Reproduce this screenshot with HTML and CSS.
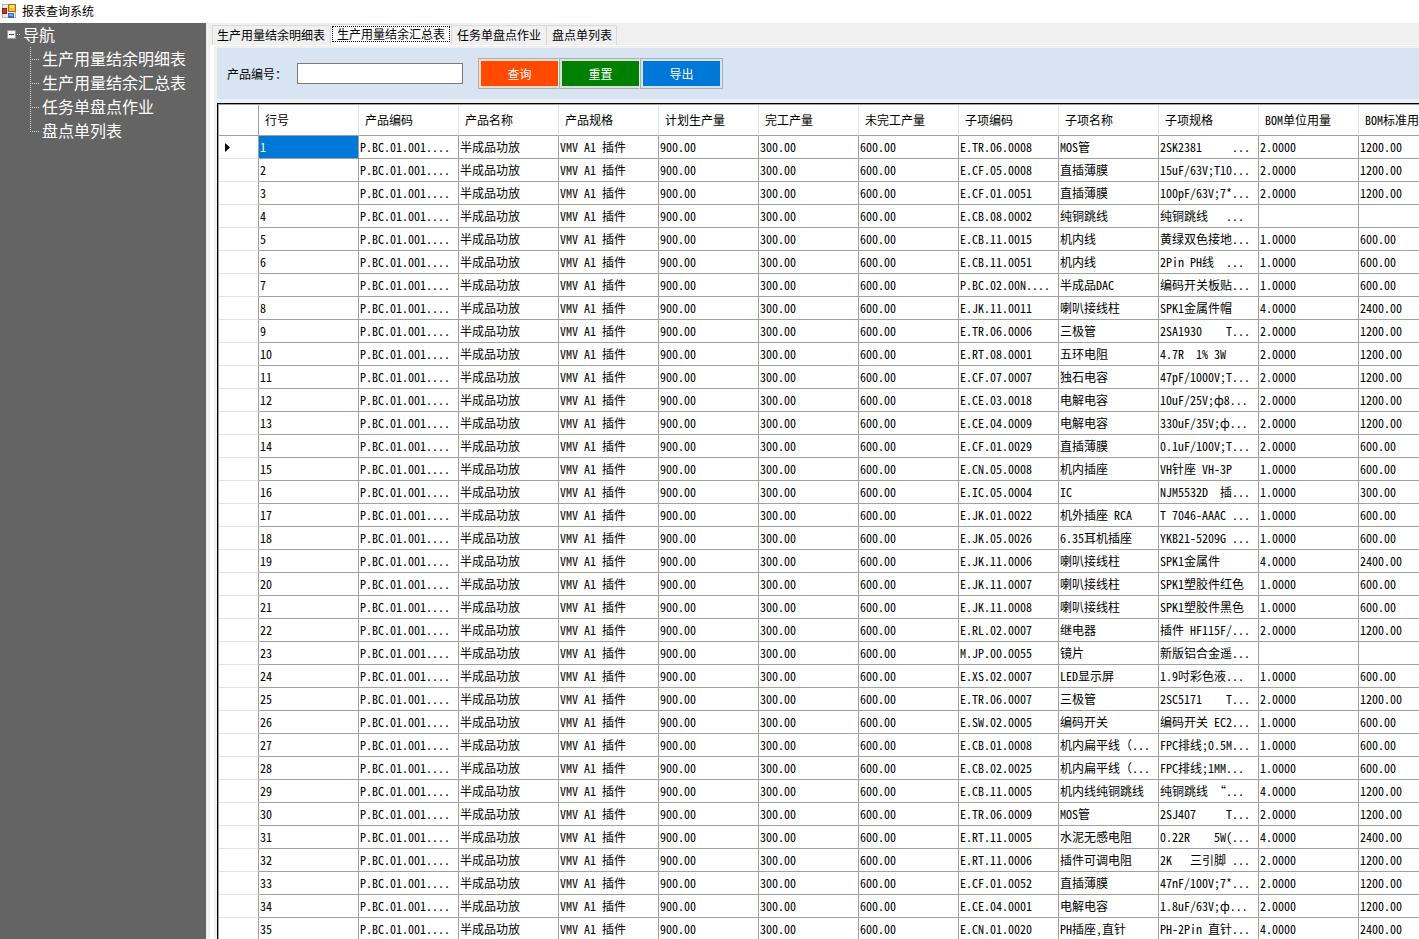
FILE: index.html
```html
<!DOCTYPE html>
<html lang="zh-CN">
<head>
<meta charset="utf-8">
<title>报表查询系统</title>
<link rel="stylesheet" href="styles.css">
</head>
<body>
<header class="titlebar">
  <svg class="app-icon" width="14" height="14" viewBox="0 0 14 14" aria-hidden="true">
    <rect x="0" y="0" width="14" height="14" fill="#b9b4ac"/>
    <rect x="1" y="1" width="12" height="12" fill="#eeeae2"/>
    <rect x="6" y="0" width="8" height="8" fill="#a8700c"/>
    <rect x="7" y="1" width="6" height="6" fill="#f5bd2c"/>
    <rect x="8" y="1" width="4" height="3" fill="#ffe07c"/>
    <rect x="0" y="4" width="5" height="6" fill="#8d1d14"/>
    <rect x="1" y="5" width="3" height="4" fill="#c8392b"/>
    <rect x="6" y="9" width="6" height="5" fill="#3d68c4"/>
    <rect x="7" y="10" width="4" height="2" fill="#7ba4ee"/>
  </svg>
  <h1 class="title">报表查询系统</h1>
</header>
<div class="workspace">
  <nav class="sidebar" aria-label="导航">
    <div class="tree-root">
      <svg class="expander" width="14" height="10" viewBox="0 0 14 10" aria-hidden="true">
        <rect x="0" y="0" width="9" height="9" fill="#9a9a9a"/>
        <rect x="1" y="1" width="7" height="7" fill="#f4f4f4"/>
        <rect x="2" y="4" width="5" height="1" fill="#33466e"/>
        <path d="M10 4.500h1M12 4.500h1" stroke="#d8d8d8"/>
      </svg>
      <span class="tree-label">导航</span>
    </div>
    <ul class="tree">
      <li><a class="tree-label" href="#detail">生产用量结余明细表</a></li>
      <li><a class="tree-label" href="#summary">生产用量结余汇总表</a></li>
      <li><a class="tree-label" href="#task">任务单盘点作业</a></li>
      <li><a class="tree-label" href="#list">盘点单列表</a></li>
    </ul>
  </nav>
  <main class="content">
    <div class="tabs" role="tablist">
      <button class="tab" role="tab" type="button">生产用量结余明细表</button>
      <button class="tab tab-active" role="tab" type="button" aria-selected="true"><span class="focus">生产用量结余汇总表</span></button>
      <button class="tab" role="tab" type="button">任务单盘点作业</button>
      <button class="tab" role="tab" type="button">盘点单列表</button>
    </div>
    <section class="page">
      <form class="filters">
        <label class="filter-label" for="product">产品编号：</label>
        <input class="filter-input" id="product" type="text">
        <div class="actions">
          <button class="action query" type="button">查询</button>
          <button class="action reset" type="button">重置</button>
          <button class="action export" type="button">导出</button>
        </div>
      </form>
      <div class="grid-wrap">
        <table class="grid">
          <thead><tr id="head"></tr></thead>
          <tbody id="rows"></tbody>
        </table>
      </div>
    </section>
  </main>
</div>
<script src="app.js"></script>
</body>
</html>
```
FILE: styles.css
```css
* { box-sizing: border-box; }

body {
  margin: 0;
  height: 100vh;
  display: flex;
  flex-direction: column;
  overflow: hidden;
  background: #f0f0f0;
  color: #000;
  font: 12px/16px "Noto Sans CJK SC", sans-serif;
}

button, input { font: inherit; }

.titlebar {
  flex: none;
  display: flex;
  align-items: center;
  gap: 6px;
  height: 23px;
  padding: 0 0 1px 2px;
  background: #fff;
}
.title { margin: 0; font-size: 12px; font-weight: 400; }

.workspace { flex: 1; min-height: 0; display: flex; }

.sidebar {
  flex: none;
  width: 206px;
  background: #646464;
  color: #fff;
  font-size: 16px;
  line-height: 24px;
}
.tree-root { display: flex; align-items: center; gap: 2px; height: 24px; padding-left: 7px; }
.tree { list-style: none; margin: 0; padding: 0 0 0 30px; }
.tree li {
  display: flex;
  align-items: center;
  gap: 3px;
  height: 24px;
  background: repeating-linear-gradient(#d8d8d8 0 1px, transparent 1px 2px) 0 0 / 1px 100% no-repeat;
}
.tree li:last-child { background-size: 1px 12px; }
.tree li::before {
  content: "";
  width: 9px;
  height: 1px;
  background: repeating-linear-gradient(90deg, #d8d8d8 0 1px, transparent 1px 2px);
}
.tree-label { padding-bottom: 2px; color: inherit; text-decoration: none; }

.content {
  flex: 1;
  min-width: 0;
  display: flex;
  flex-direction: column;
  padding: 1px 0 0 4px;
}
.tabs { flex: none; display: flex; align-items: flex-end; height: 21px; padding-left: 2px; }
.tab {
  height: 20px;
  padding: 0 5px 2px;
  border: 1px solid #d9d9d9;
  border-width: 1px 1px 0 0;
  background: #f0f0f0;
  color: #000;
  line-height: 17px;
  white-space: nowrap;
}
.tab:first-child { padding-left: 4px; border-left-width: 1px; }
.tab:last-child { padding-right: 4px; }
.tab-active { height: 21px; padding: 0 1px 2px; background: #fff; }
.focus { display: block; padding: 0 4px; border: 1px dotted #000; line-height: 14px; }

.page {
  flex: 1;
  min-height: 0;
  display: flex;
  flex-direction: column;
  gap: 4px;
  padding: 2px 0 0 3px;
  border-left: 4px solid #fff;
  border-top: 1px solid #fff;
  background: #f0f0f0;
}
.filters {
  flex: none;
  display: flex;
  align-items: center;
  height: 51px;
  padding-left: 10px;
  background: #d8e4f1;
}
.filter-label { width: 70px; }
.filter-input {
  width: 166px;
  height: 21px;
  padding: 0 4px;
  border: 1px solid #7a7a7a;
  background: #fff;
}
.actions { display: flex; margin-left: 15px; }
.action {
  width: 81px;
  height: 31px;
  padding: 2px 0 2px 2px;
  border: 1px solid #adadad;
  border-right-color: #f0f0f0;
  color: #fff;
  line-height: 24px;
}
.query { background: linear-gradient(#ff4a00, #ff4a00) content-box, #f0dcd2; }
.reset { background: linear-gradient(#008000, #008000) content-box, #d5e2d5; }
.export {
  width: 83px;
  padding-right: 2px;
  border-right-color: #adadad;
  background: linear-gradient(#0078d7, #0078d7) content-box, #d2e2f0;
}

.grid-wrap {
  flex: 1;
  min-height: 0;
  overflow: hidden;
  border: 1px solid #000;
  border-width: 1px 0 0 1px;
  background: #fff;
}
.grid {
  width: 1241px;
  table-layout: fixed;
  border-collapse: separate;
  border-spacing: 0;
  border: 1px solid #a0a0a0;
  border-width: 1px 0 0 1px;
  font-family: "Noto Sans Mono CJK SC", "Noto Sans CJK SC", monospace;
}
.grid th, .grid td {
  overflow: hidden;
  border: 0 solid #a0a0a0;
  border-width: 0 1px 1px 0;
  text-align: left;
  font-weight: 400;
  white-space: pre;
}
.grid thead th { height: 31px; padding: 0 6px; border-right-color: #e3e3e3; }
.grid thead .corner, .grid .row-head { width: 40px; padding: 0 0 0 6px; border-right-color: #a0a0a0; }
.grid td { height: 23px; padding: 0 1px; line-height: 20px; }
.grid .row-head { border-bottom-color: #e3e3e3; }
.grid .selected { background: #0078d7; color: #fff; }
.marker { display: block; width: 5px; height: 9px; }
```
FILE: app.js
```js
const columns = ["行号", "产品编码", "产品名称", "产品规格", "计划生产量", "完工产量", "未完工产量",
  "子项编码", "子项名称", "子项规格", "BOM单位用量", "BOM标准用"];

// [子项编码, 子项名称, 子项规格, BOM单位用量, BOM标准用]
const items = [
  ["E.TR.06.0008", "MOS管", "2SK2381     ...", "2.0000", "1200.00"],
  ["E.CF.05.0008", "直插薄膜", "15uF/63V;T10...", "2.0000", "1200.00"],
  ["E.CF.01.0051", "直插薄膜", "100pF/63V;7*...", "2.0000", "1200.00"],
  ["E.CB.08.0002", "纯铜跳线", "纯铜跳线   ...", "", ""],
  ["E.CB.11.0015", "机内线", "黄绿双色接地...", "1.0000", "600.00"],
  ["E.CB.11.0051", "机内线", "2Pin PH线  ...", "1.0000", "600.00"],
  ["P.BC.02.00N....", "半成品DAC", "编码开关板贴...", "1.0000", "600.00"],
  ["E.JK.11.0011", "喇叭接线柱", "SPK1金属件帽", "4.0000", "2400.00"],
  ["E.TR.06.0006", "三极管", "2SA1930    T...", "2.0000", "1200.00"],
  ["E.RT.08.0001", "五环电阻", "4.7R  1% 3W", "2.0000", "1200.00"],
  ["E.CF.07.0007", "独石电容", "47pF/1000V;T...", "2.0000", "1200.00"],
  ["E.CE.03.0018", "电解电容", "10uF/25V;ф8...", "2.0000", "1200.00"],
  ["E.CE.04.0009", "电解电容", "330uF/35V;ф...", "2.0000", "1200.00"],
  ["E.CF.01.0029", "直插薄膜", "0.1uF/100V;T...", "2.0000", "600.00"],
  ["E.CN.05.0008", "机内插座", "VH针座 VH-3P", "1.0000", "600.00"],
  ["E.IC.05.0004", "IC", "NJM5532D  插...", "1.0000", "300.00"],
  ["E.JK.01.0022", "机外插座 RCA", "T 7046-AAAC ...", "1.0000", "600.00"],
  ["E.JK.05.0026", "6.35耳机插座", "YKB21-5209G ...", "1.0000", "600.00"],
  ["E.JK.11.0006", "喇叭接线柱", "SPK1金属件", "4.0000", "2400.00"],
  ["E.JK.11.0007", "喇叭接线柱", "SPK1塑胶件红色", "1.0000", "600.00"],
  ["E.JK.11.0008", "喇叭接线柱", "SPK1塑胶件黑色", "1.0000", "600.00"],
  ["E.RL.02.0007", "继电器", "插件 HF115F/...", "2.0000", "1200.00"],
  ["M.JP.00.0055", "镜片", "新版铝合金遥...", "", ""],
  ["E.XS.02.0007", "LED显示屏", "1.9吋彩色液...", "1.0000", "600.00"],
  ["E.TR.06.0007", "三极管", "2SC5171    T...", "2.0000", "1200.00"],
  ["E.SW.02.0005", "编码开关", "编码开关 EC2...", "1.0000", "600.00"],
  ["E.CB.01.0008", "机内扁平线（...", "FPC排线;0.5M...", "1.0000", "600.00"],
  ["E.CB.02.0025", "机内扁平线（...", "FPC排线;1MM...", "1.0000", "600.00"],
  ["E.CB.11.0005", "机内线纯铜跳线", "纯铜跳线 “...", "4.0000", "1200.00"],
  ["E.TR.06.0009", "MOS管", "2SJ407     T...", "2.0000", "1200.00"],
  ["E.RT.11.0005", "水泥无感电阻", "0.22R    5W(...", "4.0000", "2400.00"],
  ["E.RT.11.0006", "插件可调电阻", "2K   三引脚 ...", "2.0000", "1200.00"],
  ["E.CF.01.0052", "直插薄膜", "47nF/100V;7*...", "2.0000", "1200.00"],
  ["E.CE.04.0001", "电解电容", "1.8uF/63V;ф...", "2.0000", "1200.00"],
  ["E.CN.01.0020", "PH插座,直针", "PH-2Pin 直针...", "4.0000", "2400.00"]
];

document.getElementById("head").innerHTML =
  '<th class="corner"></th>' + columns.map(name => `<th scope="col">${name}</th>`).join("");

document.getElementById("rows").innerHTML = items.map((item, i) => {
  const cells = [String(i + 1), "P.BC.01.001....", "半成品功放", "VMV A1 插件", "900.00", "300.00", "600.00", ...item];
  const marker = i === 0
    ? '<svg class="marker" viewBox="0 0 5 9" aria-hidden="true"><path d="M0 0L5 4.500L0 9Z"/></svg>'
    : "";
  return `<tr><th class="row-head" scope="row">${marker}</th>` +
    cells.map((text, c) => `<td${i === 0 && c === 0 ? ' class="selected"' : ""}>${text}</td>`).join("") +
    "</tr>";
}).join("");
```
